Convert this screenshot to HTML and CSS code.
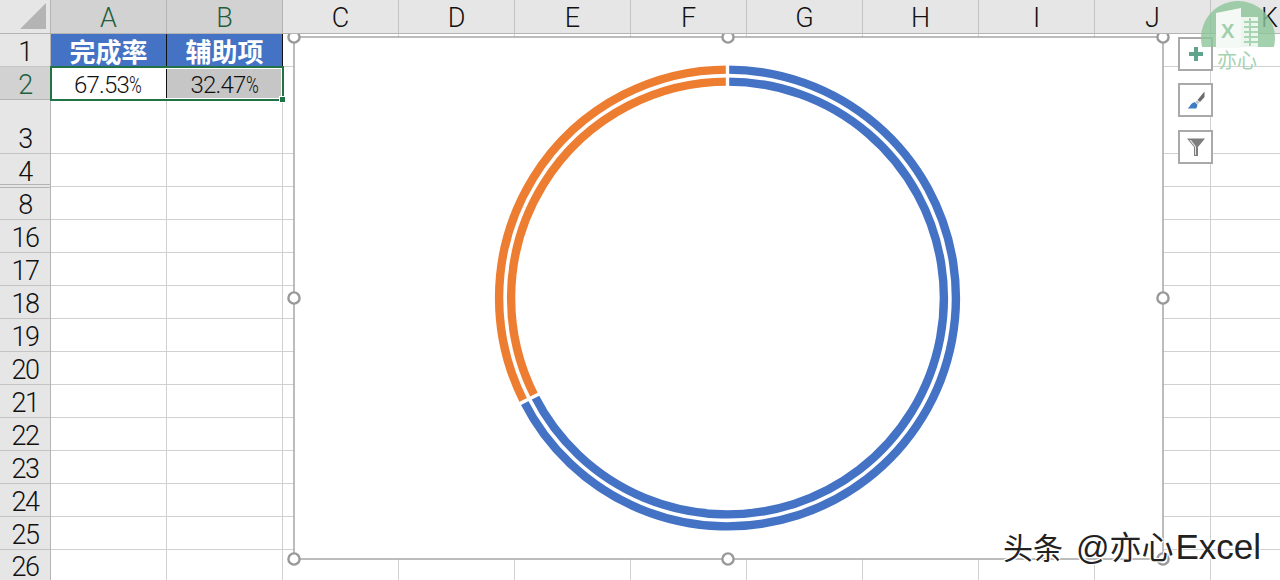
FILE: index.html
```html
<!DOCTYPE html>
<html lang="zh">
<head>
<meta charset="utf-8">
<title>Excel 完成率圆环图</title>
<link rel="stylesheet" href="styles.css">
</head>
<body>
<div class="sheet">
  <div class="corner"><svg class="corner-tri" width="26" height="26" viewBox="0 0 26 26"><path d="M26 0V26H0Z"/></svg></div>
  <div class="colheads">
    <div class="ch sel">A</div><div class="ch sel">B</div><div class="ch">C</div><div class="ch">D</div><div class="ch">E</div><div class="ch">F</div><div class="ch">G</div><div class="ch">H</div><div class="ch">I</div><div class="ch">J</div><div class="ch last">K</div>
  </div>
  <div class="rowheads">
    <div class="rh">1</div>
    <div class="rh sel">2</div>
    <div class="rh tall">3</div>
    <div class="rh dbl">4</div>
    <div class="rh after-dbl">8</div>
    <div class="rh">16</div>
    <div class="rh">17</div>
    <div class="rh">18</div>
    <div class="rh">19</div>
    <div class="rh">20</div>
    <div class="rh">21</div>
    <div class="rh">22</div>
    <div class="rh">23</div>
    <div class="rh">24</div>
    <div class="rh">25</div>
    <div class="rh end">26</div>
  </div>
  <div class="cells">
    <div class="row head"><div class="cell title">完成率</div><div class="cell title">辅助项</div></div>
    <div class="row data"><div class="cell num">67.53<span class="pct">%</span></div><div class="cell num grey">32.47<span class="pct">%</span></div></div>
    <div class="row tall"></div>
    <div class="row"></div><div class="row"></div><div class="row"></div><div class="row"></div><div class="row"></div><div class="row"></div><div class="row"></div><div class="row"></div><div class="row"></div><div class="row"></div><div class="row"></div><div class="row"></div><div class="row end"></div>
    <div class="selection"></div>
    <div class="fill-handle"></div>
  </div>
</div>

<div class="chart-frame">
  <svg class="chart" width="890" height="540" viewBox="0 0 890 540">
    <rect class="plot" x="11" y="11" width="869" height="522"/>
    <g class="ring">
      <path class="blue" d="M444.500 43.600A228.400 228.400 0 1 1 240.800 375.300"/>
      <path class="orange" d="M240.800 375.300A228.400 228.400 0 0 1 444.500 43.600"/>
      <path class="blue" d="M444.500 55.600A216.400 216.400 0 1 1 251.500 369.900"/>
      <path class="orange" d="M251.500 369.900A216.400 216.400 0 0 1 444.500 55.600"/>
    </g>
    <path class="cut" d="M444.500 35V90"/>
    <path class="cut" d="M224 384L272 360"/>
    <g class="handles">
      <circle cx="11" cy="11" r="5.6"/><circle cx="445" cy="11" r="5.6"/><circle cx="880" cy="11" r="5.6"/>
      <circle cx="11" cy="272" r="5.6"/><circle cx="880" cy="272" r="5.6"/>
      <circle cx="11" cy="533" r="5.6"/><circle cx="445" cy="533" r="5.6"/><circle cx="880" cy="533" r="5.6"/>
    </g>
  </svg>
</div>

<div class="tools">
  <div class="tool"><svg width="24" height="24" viewBox="0 0 24 24"><path class="ic-plus" d="M10 5h4v5h5v4h-5v5h-4v-5H5v-4h5z"/></svg></div>
  <div class="tool"><svg width="24" height="24" viewBox="0 0 24 24"><path class="ic-handle" d="M20.500 3.500V9L16 14l-2.500-2z"/><path class="ic-mid" d="M13 12.500l2.500 2-1.800 1.500-2.200-2z"/><path class="ic-brush" d="M3 20.500c2.500-.5 3-4 5.500-5.500 1-.6 2-.8 2.800-.6l2 2c.2 1.500-.3 3-1.300 4.100z"/></svg></div>
  <div class="tool"><svg width="24" height="24" viewBox="0 0 24 24"><path class="ic-funnel" d="M3 3.500h18l-7 8.500v9h-4v-9z"/><path class="ic-funnel-in" d="M5.500 5h1.500l5 6.500v8.500h-1v-8z"/></svg></div>
</div>

<div class="logo">
  <svg width="76" height="50" viewBox="0 0 76 50">
    <path class="logo-disc" d="M2.100 47A37 37 0 1 1 73.900 47Z"/>
    <path class="logo-page" d="M16 13L41 8V48H16Z"/>
    <path class="logo-sheet" d="M41 17H58V47H41Z"/>
    <path class="logo-lines" d="M44 22H58M44 27H58M44 32H58M44 37H58M44 42H58M50 18V46"/>
    <text class="logo-x" x="21" y="38">X</text>
  </svg>
  <span class="logo-name">亦心</span>
</div>

<div class="credit"><span class="cn">头条</span><span class="en at">@</span><span class="cn wide">亦心</span><span class="en word">Excel</span></div>
</body>
</html>
```

FILE: styles.css
```css
* { box-sizing: border-box; }
html, body { margin: 0; height: 580px; overflow: hidden; background: #fff; }
body { position: relative; font-family: "Roboto", "Noto Sans CJK SC", sans-serif; }

.sheet {
  display: grid;
  grid-template-columns: 51px 1fr;
  grid-template-rows: 34px 546px;
  width: 1280px;
  height: 580px;
}

.corner {
  position: relative;
  z-index: 2;
  background: #e6e6e6;
  border-right: 1px solid #b4b4b4;
  border-bottom: 1px solid #b4b4b4;
  display: flex;
  justify-content: flex-end;
  align-items: flex-end;
  padding: 0 4px 4px 0;
}
.corner-tri path { fill: #b4b4b4; }

.colheads {
  position: relative;
  z-index: 2;
  display: flex;
  background: #e6e6e6;
  border-bottom: 1px solid #b4b4b4;
}
.ch {
  flex: 0 0 116px;
  border-right: 1px solid #c4c4c4;
  font-weight: 300;
  font-size: 27px;
  line-height: 37px;
  text-align: center;
  color: #111;
}
.ch.sel { background: #d2d2d2; color: #1f5f3f; border-right-color: #b4b4b4; }
.ch.last { flex: 1; border-right: 0; text-align: left; padding-left: 50px; }

.rowheads {
  display: flex;
  flex-direction: column;
  min-height: 0;
  overflow: hidden;
  background: #e6e6e6;
  border-right: 1px solid #b4b4b4;
}
.rh {
  flex: 0 0 33px;
  min-height: 0;
  border-bottom: 1px solid #c4c4c4;
  font-weight: 300;
  font-size: 27px;
  line-height: 36px;
  letter-spacing: -1.500px;
  text-align: center;
  color: #111;
}
.rh.sel { background: #d2d2d2; color: #1f5f3f; border-bottom-color: #b4b4b4; }
.rh.tall { flex-basis: 54px; line-height: 78px; }
.rh.dbl { flex-basis: 34px; border-bottom: 4px double #b4b4b4; }
.rh.after-dbl { flex-basis: 32px; line-height: 34px; }
.rh.end { border-bottom: 0; flex-basis: 30px; padding-top: 4px; line-height: 26px; }

.cells {
  position: relative;
  min-height: 0;
  overflow: visible;
  background-image: repeating-linear-gradient(90deg, transparent 0 115px, #d0d0d0 115px 116px);
}
.row { display: flex; height: 33px; border-bottom: 1px solid #d0d0d0; }
.row.tall { height: 54px; }
.row.end { height: 30px; border-bottom: 0; }

.cell {
  flex: 0 0 116px;
  text-align: center;
  border-right: 1px solid #111;
}
.cell.title {
  background: #4472c4;
  color: #fff;
  font-family: "Noto Sans CJK SC", sans-serif;
  font-weight: 700;
  font-size: 26px;
  line-height: 33px;
  height: 32px;
}
.cell.num {
  background: #fff;
  color: #111;
  font-weight: 300;
  font-size: 24px;
  line-height: 36px;
  letter-spacing: -.8px;
  white-space: nowrap;
}
.cell.num.grey { background: #c6c6c6; border-right: 0; }
.pct {
  display: inline-block;
  width: 14px;
  letter-spacing: 0;
  transform: scaleX(.72);
  transform-origin: left center;
}
.row.data { border-bottom: 0; }

.selection {
  position: absolute;
  left: -1px;
  top: 32px;
  width: 234px;
  height: 35px;
  border: 2px solid #217346;
  box-shadow: inset 0 0 0 1px #fff;
}
.cells::before {
  content: "";
  position: absolute;
  z-index: 1;
  left: 0;
  top: -2px;
  width: 232px;
  height: 2px;
  background: #217346;
}
.fill-handle {
  position: absolute;
  left: 229px;
  top: 63px;
  width: 5px;
  height: 5px;
  background: #217346;
  outline: 1px solid #fff;
}

.chart-frame { position: absolute; z-index: 1; left: 283px; top: 26px; width: 890px; height: 540px; }
.chart { display: block; }
.plot { fill: #fff; stroke: #a6a6a6; stroke-width: 1.5; }
.ring path { fill: none; stroke-width: 8.4; }
.ring .blue { stroke: #4472c4; }
.ring .orange { stroke: #ed7d31; }
.cut { stroke: #fff; stroke-width: 3.400; fill: none; }
.handles circle { fill: #fff; stroke: #999; stroke-width: 2.400; }

.tools { position: absolute; z-index: 1; left: 1178px; top: 36.7px; display: flex; flex-direction: column; gap: 12.7px; }
.tool {
  width: 35px;
  height: 34px;
  background: #fff;
  border: 2px solid #a9a9a9;
  display: flex;
  align-items: center;
  justify-content: center;
}
.ic-plus { fill: #5fa58b; }
.ic-handle { fill: #6b6b6b; }
.ic-brush { fill: #3f7cc4; }
.ic-mid { fill: #b8bcc2; }
.ic-funnel { fill: #7d7d7d; }
.ic-funnel-in { fill: #e4e4e4; }

.logo { position: absolute; z-index: 3; left: 1200px; top: 0; width: 80px; height: 72px; pointer-events: none; }
.logo svg { display: block; }
.logo-disc { fill: #8cc59a; opacity: .8; }
.logo-page { fill: #f4f9f5; }
.logo-sheet { fill: #f4f9f5; opacity: .9; }
.logo-lines { stroke: #a9d5b4; stroke-width: 2; fill: none; }
.logo-x { font-family: "Liberation Sans", sans-serif; font-weight: 700; font-size: 20px; fill: #9fcfac; }
.logo-name {
  position: absolute;
  left: 17px;
  top: 47px;
  font-family: "Noto Sans CJK SC", sans-serif;
  font-size: 20px;
  line-height: 26px;
  color: #a5d3b2;
}

.credit {
  position: absolute;
  z-index: 4;
  left: 1003px;
  top: 523px;
  line-height: 44px;
  color: #222;
  white-space: nowrap;
  text-shadow: 1px 1px 0 #fff, -1px -1px 0 #fff, 1px -1px 0 #fff, -1px 1px 0 #fff;
}
.credit .cn { font-family: "Noto Sans CJK SC", sans-serif; font-size: 30px; font-weight: 400; }
.credit .cn.wide { font-size: 32px; }
.credit .en { font-family: "Liberation Sans", sans-serif; font-size: 35px; }
.credit .at { margin-left: 13px; font-size: 33px; }
.credit .word { margin-left: 2px; }
```
